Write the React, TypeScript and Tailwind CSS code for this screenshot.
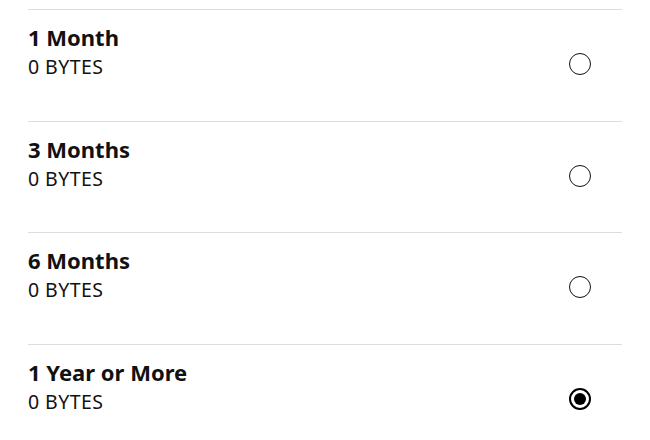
import React from "react";

const items = [
  { title: "1 Month", size: "0 BYTES", selected: false },
  { title: "3 Months", size: "0 BYTES", selected: false },
  { title: "6 Months", size: "0 BYTES", selected: false },
  { title: "1 Year or More", size: "0 BYTES", selected: true },
];

function Radio({ selected }: { selected: boolean }) {
  if (selected) {
    return (
      <div className="w-[22px] h-[22px] rounded-full border-2 border-black flex items-center justify-center">
        <div className="w-[12px] h-[12px] rounded-full bg-black" />
      </div>
    );
  }
  return <div className="w-[22px] h-[22px] rounded-full border-[1.5px] border-[#111]" />;
}

export default function App() {
  return (
    <div
      className="w-[650px] h-[440px] overflow-hidden bg-white pt-[9px] px-[28px]"
      style={{ fontFamily: '"Noto Sans", "Open Sans", sans-serif' }}
    >
      {items.map((it) => (
        <div
          key={it.title}
          className="h-[111.7px] border-t border-[#dddddd] flex items-start justify-between"
        >
          <div className="pt-[13px] text-[#111]">
            <div className="text-[22px] leading-[28px] font-bold">{it.title}</div>
            <div className="mt-[2px] text-[19.5px] leading-[27px] tracking-[0.45px]">{it.size}</div>
          </div>
          <div className="mr-[31px] mt-[43px]">
            <Radio selected={it.selected} />
          </div>
        </div>
      ))}
    </div>
  );
}
